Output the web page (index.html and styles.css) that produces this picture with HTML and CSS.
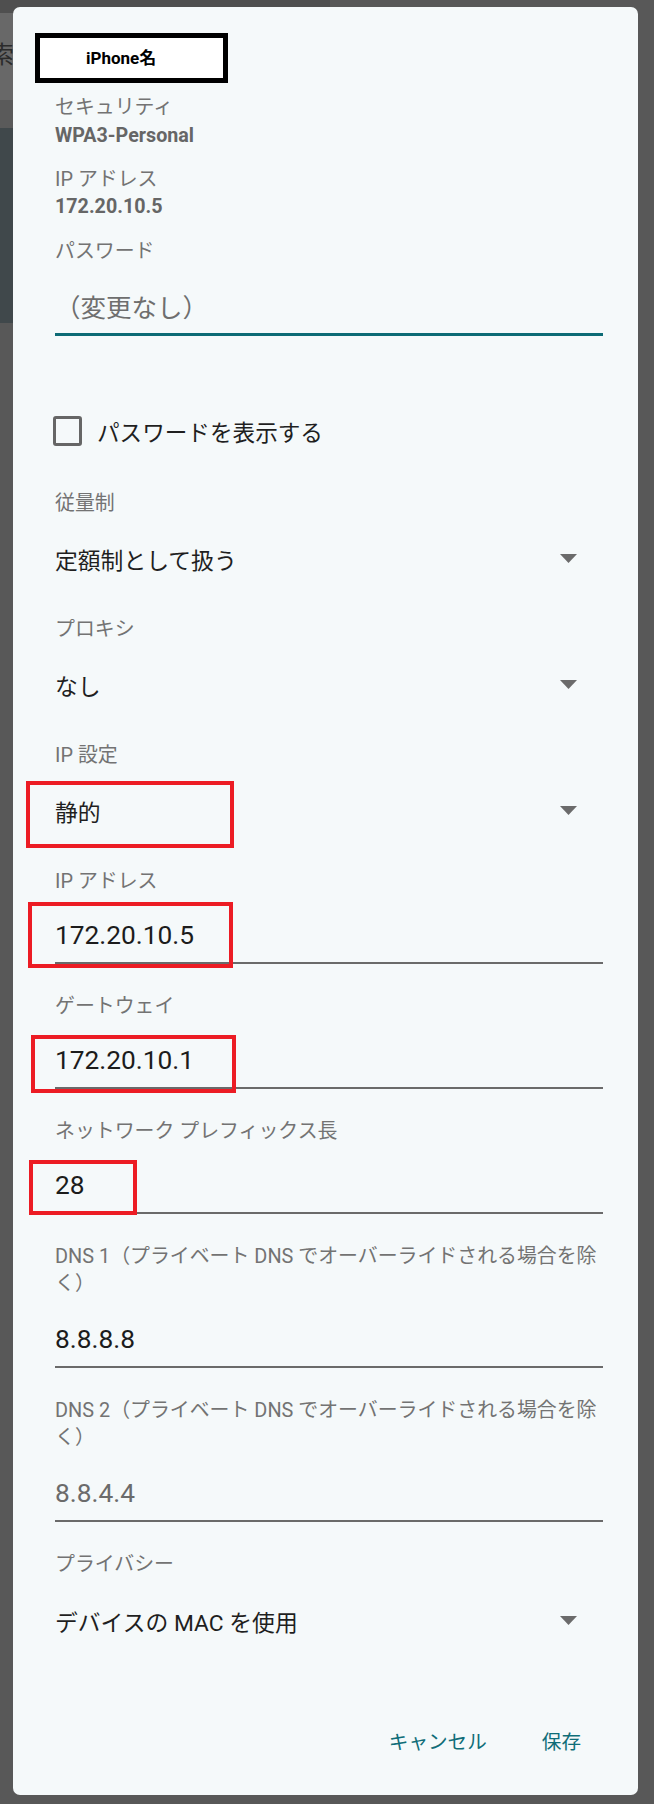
FILE: index.html
```html
<!DOCTYPE html>
<html lang="ja">
<head>
<meta charset="utf-8">
<title>Wi-Fi 設定</title>
<link rel="stylesheet" href="styles.css">
</head>
<body>
<div class="screen">
  <div class="backdrop">
    <div class="band b1"></div>
    <div class="band b2"><span class="ghost">索</span></div>
    <div class="band b3"></div>
    <div class="band b4"></div>
  </div>

  <div class="dialog">
    <div class="title-box">iPhone名</div>

    <div class="lbl lbl-first">セキュリティ</div>
    <div class="ro">WPA3-Personal</div>

    <div class="lbl lbl-info">IP アドレス</div>
    <div class="ro">172.20.10.5</div>

    <div class="lbl lbl-info2">パスワード</div>
    <div class="field field-focus placeholder">（変更なし）</div>

    <div class="check-row">
      <span class="checkbox"></span>
      <span class="check-text">パスワードを表示する</span>
    </div>

    <div class="lbl lbl-after-check">従量制</div>
    <div class="spinner"><span>定額制として扱う</span><svg class="tri" width="17" height="9" viewBox="0 0 17 9"><path d="M0 0H17L8.5 9Z"/></svg></div>

    <div class="lbl lbl-after-spin">プロキシ</div>
    <div class="spinner"><span>なし</span><svg class="tri" width="17" height="9" viewBox="0 0 17 9"><path d="M0 0H17L8.5 9Z"/></svg></div>

    <div class="lbl lbl-after-spin">IP 設定</div>
    <div class="spinner"><span>静的</span><svg class="tri" width="17" height="9" viewBox="0 0 17 9"><path d="M0 0H17L8.5 9Z"/></svg><i class="mark m-static"></i></div>

    <div class="lbl lbl-after-spin">IP アドレス</div>
    <div class="field">172.20.10.5<i class="mark m-ip"></i></div>

    <div class="lbl">ゲートウェイ</div>
    <div class="field">172.20.10.1<i class="mark m-gw"></i></div>

    <div class="lbl">ネットワーク プレフィックス長</div>
    <div class="field">28<i class="mark m-pre"></i></div>

    <div class="lbl">DNS 1（プライベート DNS でオーバーライドされる場合を除く）</div>
    <div class="field field-after-multi">8.8.8.8</div>

    <div class="lbl">DNS 2（プライベート DNS でオーバーライドされる場合を除く）</div>
    <div class="field field-after-multi hint">8.8.4.4</div>

    <div class="lbl">プライバシー</div>
    <div class="spinner spinner-last"><span>デバイスの MAC を使用</span><svg class="tri" width="17" height="9" viewBox="0 0 17 9"><path d="M0 0H17L8.5 9Z"/></svg></div>

    <div class="actions">
      <span class="btn">キャンセル</span>
      <span class="btn">保存</span>
    </div>
  </div>
</div>
</body>
</html>
```

FILE: styles.css
```css
* { box-sizing: border-box; }

html, body {
  margin: 0;
  padding: 0;
}

body {
  background: #585858;
  font-family: Roboto, "Noto Sans CJK JP", sans-serif;
}

.screen {
  position: relative;
  width: 654px;
  height: 1804px;
  overflow: hidden;
  background: #585858;
}

.backdrop {
  width: 330px;
}

.band { width: 100%; }
.b1 { height: 13px; background: #4f4f4f; }
.b2 { height: 87px; background: #686868; overflow: hidden; }
.b3 { height: 28px; background: #5a5a5a; }
.b4 { height: 195px; background: #40484b; }

.ghost {
  display: block;
  margin-left: -10px;
  padding-top: 30px;
  font-size: 24px;
  line-height: 24px;
  color: #2b2b2b;
}

.dialog {
  position: absolute;
  left: 13px;
  top: 7px;
  width: 625px;
  height: 1788px;
  background: #f5f9fa;
  border-radius: 7px;
  padding: 0 35px 0 42px;
  color: #1f1f1f;
}

.title-box {
  margin-top: 26px;
  margin-left: -20px;
  width: 193px;
  height: 50px;
  border: 5px solid #000;
  background: #fff;
  font-weight: 700;
  font-size: 17px;
  line-height: 40px;
  padding-left: 46px;
  color: #000;
}

.lbl {
  font-size: 19.9px;
  line-height: 27px;
  color: #737373;
  margin-top: 28.5px;
}

.lbl-first { margin-top: 11px; line-height: 28px; }
.lbl-info { margin-top: 16px; }
.lbl-info2 { margin-top: 16.5px; }
.lbl-after-check { margin-top: 38.5px; }
.lbl-after-spin { margin-top: 36.5px; }

.ro {
  font-size: 19.7px;
  font-weight: 700;
  line-height: 28px;
  color: #666;
}

.field {
  position: relative;
  margin-top: 20.5px;
  font-size: 26.3px;
  line-height: 40px;
  padding-bottom: 7px;
  border-bottom: 2px solid #6a6a6a;
  color: #1c1c1c;
}

.field-focus {
  margin-top: 23.5px;
  padding-bottom: 5px;
  border-bottom: 3px solid #0d6b75;
}

.field-after-multi { margin-top: 22.5px; }

.placeholder {
  color: #6e6e6e;
  font-size: 25.5px;
}

.hint { color: #6b6b6b; }

.check-row {
  display: flex;
  align-items: center;
  height: 40px;
  margin-top: 75px;
  margin-left: -2px;
}

.checkbox {
  width: 29px;
  height: 30px;
  border: 3px solid #666;
  border-radius: 3px;
  flex: none;
}

.check-text {
  margin-left: 15px;
  font-size: 22.6px;
  color: #1f1f1f;
}

.spinner {
  position: relative;
  display: flex;
  align-items: center;
  justify-content: space-between;
  height: 40px;
  margin-top: 22.5px;
  padding-right: 26px;
  font-size: 22.8px;
  color: #1f1f1f;
}

.spinner-last { margin-top: 23.5px; }

.tri {
  fill: #6b6b6b;
  margin-top: -2px;
}

.mark {
  position: absolute;
  border: 4px solid #ec1c24;
  pointer-events: none;
}

.m-static { left: -29px; top: -10px; width: 208px; height: 67px; }
.m-ip { left: -27.5px; top: -13px; width: 205px; height: 66px; }
.m-gw { left: -24px; top: -5px; width: 205px; height: 58px; }
.m-pre { left: -26px; top: -5px; width: 108px; height: 55px; }

.actions {
  display: flex;
  justify-content: flex-end;
  gap: 55px;
  margin-top: 82px;
  margin-right: 22px;
  line-height: 40px;
}

.btn {
  font-size: 19.6px;
  color: #0f6d78;
}
```
